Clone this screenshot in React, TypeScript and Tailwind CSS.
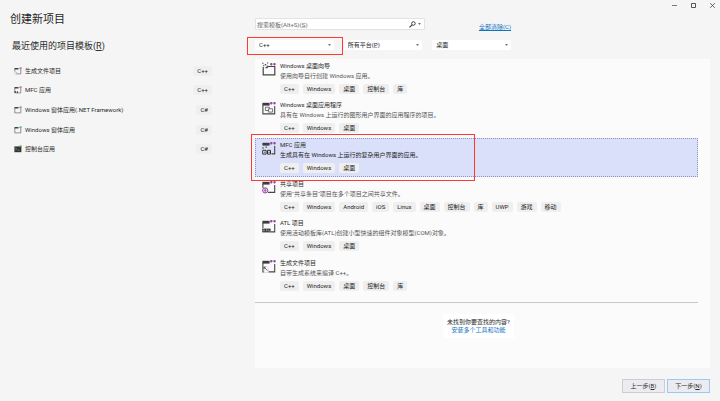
import React, { ReactNode } from "react";

type IconKind = "wizard" | "desktop" | "mfc" | "shared" | "atl" | "makefile";

interface Template {
  name: string;
  desc: string;
  icon: IconKind;
  tags: string[];
}

const TEMPLATES: Template[] = [
  {
    name: "Windows 桌面向导",
    desc: "使用向导自行创建 Windows 应用。",
    icon: "wizard",
    tags: ["C++", "Windows", "桌面", "控制台", "库"],
  },
  {
    name: "Windows 桌面应用程序",
    desc: "具有在 Windows 上运行的图形用户界面的应用程序的项目。",
    icon: "desktop",
    tags: ["C++", "Windows", "桌面"],
  },
  {
    name: "MFC 应用",
    desc: "生成具有在 Windows 上运行的复杂用户界面的应用。",
    icon: "mfc",
    tags: ["C++", "Windows", "桌面"],
  },
  {
    name: "共享项目",
    desc: "使用\"共享条目\"项目在多个项目之间共享文件。",
    icon: "shared",
    tags: ["C++", "Windows", "Android", "iOS", "Linux", "桌面", "控制台", "库", "UWP", "游戏", "移动"],
  },
  {
    name: "ATL 项目",
    desc: "使用活动模板库(ATL)创建小型快速的组件对象模型(COM)对象。",
    icon: "atl",
    tags: ["C++", "Windows", "桌面"],
  },
  {
    name: "生成文件项目",
    desc: "自带生成系统来编译 C++。",
    icon: "makefile",
    tags: ["C++", "Windows", "桌面", "控制台", "库"],
  },
];

const RECENT = [
  { name: "生成文件项目", lang: "C++", kind: "makefile" },
  { name: "MFC 应用", lang: "C++", kind: "mfc" },
  { name: "Windows 窗体应用(.NET Framework)", lang: "C#", kind: "form" },
  { name: "Windows 窗体应用", lang: "C#", kind: "form" },
  { name: "控制台应用", lang: "C#", kind: "console" },
];

const TemplateIcon = ({ kind }: { kind: IconKind }) => (
  <svg viewBox="0 0 14 14" className="w-3.5 h-3.5 shrink-0" fill="none" aria-hidden="true">
    {/* window frame */}
    {kind === "wizard" ? (
      <>
        <path d="M1.2 5v7.9h11.6V4.5H6l-1 1.2H3.5" stroke="#444" strokeWidth="1.2" />
        <path d="M.2 1.2h1.3M2.8 2.6h1.4M1 3.8h1.3M5 1h1.2M4.6 4h1.2" stroke="#444" strokeWidth="1.1" />
      </>
    ) : (
      <>
        <path d="M.4 1.8h7.2v2.8H.4z" fill="#3c3c3c" />
        <path
          d={
            kind === "desktop"
              ? "M.9 4v8.9h11.8V5"
              : kind === "mfc"
                ? "M9.5 12.9h3.2V5"
                : kind === "atl"
                  ? "M.9 4v5M8.5 12.9h4.2V5"
                  : kind === "shared"
                    ? "M.9 4v4M6 12.4h6.7V5"
                    : "M.9 4v9h1M6.5 12.9h6.2V5"
          }
          stroke="#484848"
          strokeWidth="1.1"
        />
      </>
    )}
    <path d="M8 2.2h2.6M9.3.9v2.6M11.2 2.2h2.6M12.5.9v2.6" stroke="#93479f" strokeWidth="1.3" />
    {kind === "desktop" && (
      <>
        <path d="M3.4 6.2h4v3.3h-4z" stroke="#555" strokeWidth=".8" />
        <path d="M6.4 7.8h4.2v3.3H6.4z" fill="#fbfbfb" stroke="#555" strokeWidth=".8" />
      </>
    )}
    {kind === "mfc" && (
      <>
        <path d="M1 6.2v1.6M3.5 6.2h1.4" stroke="#444" strokeWidth="1.2" />
        <path d="M.7 9.3h3.4v3.8H.7zM5.5 9.3h3v3.8h-3z" fill="#f5f5f5" stroke="#333" strokeWidth="1" />
        <path d="M1.8 11.2h1.4M6.3 11.2h1.6" stroke="#333" strokeWidth=".9" />
      </>
    )}
    {kind === "shared" && (
      <>
        <circle cx="3.2" cy="10.4" r="2.6" fill="#f1def3" stroke="#93479f" strokeWidth="1" />
        <path d="M3.2 8.2v4.4M1.8 10.4h2.8" stroke="#93479f" strokeWidth=".8" />
      </>
    )}
    {kind === "atl" && (
      <>
        <path d="M.2 9.6h8.4v3.8H.2z" fill="#3c3c3c" />
        <path d="M1.4 12.2v-1.2h1v1.2M4 10.8h1.4M4.7 10.8v1.6M6.7 10.6v1.6h1" stroke="#ddd" strokeWidth=".5" />
      </>
    )}
    {kind === "makefile" && (
      <>
        <path d="M2.2 7.6h2.4l1.6 1.6v4.2h-4z" fill="#fff" stroke="#aaa" strokeWidth=".4" />
        <path d="M2 8.2l3.4 3.4M2 8.2v1.8M2 8.2h1.6" stroke="#444" strokeWidth=".9" />
      </>
    )}
  </svg>
);

const RecentIcon = ({ kind }: { kind: string }) => {
  const accent = kind === "form" || kind === "console" ? "#4aa564" : "#a45cae";
  return (
    <svg viewBox="0 0 8 8" className="w-2 h-2 shrink-0" fill="none" aria-hidden="true">
      {kind === "console" ? (
        <>
          <path d="M.4 1.4h7v5.8h-7z" fill="#333" />
          <path d="M1.4 3l1.2 1-1.2 1M3.6 5.2h2" stroke="#ccc" strokeWidth=".5" />
        </>
      ) : (
        <>
          <path d="M.8 1.8v5.1h6V1.8" stroke="#666" strokeWidth=".7" />
          <path d="M.5 1h4v1.5h-4z" fill="#444" />
        </>
      )}
      {kind === "makefile" && <path d="M.2 4h2.2v3.4H.2z" fill="#f5f5f5" />}
      {kind === "makefile" && <path d="M1 4.4l1.8 1.8" stroke="#555" strokeWidth=".6" />}
      {kind === "mfc" && <path d="M.5 5h1.4v2H.5zM2.8 5.2h1.2V7H2.8z" fill="#555" />}
      <path d="M4.9 1.2h2.7M6.9.2v2" stroke={accent} strokeWidth=".8" />
    </svg>
  );
};

const Tag = ({ children }: { children: ReactNode }) => (
  <span className="h-2.5 px-1 flex items-center rounded-[2px] bg-[#efefef] text-[#1e1e1e] whitespace-nowrap">
    {children}
  </span>
);

const Filter = ({ label, value, children }: { label: string; value: string; children?: ReactNode }) => (
  <div className="relative h-2.5 flex items-center bg-white">
    <select
      aria-label={label}
      defaultValue={value}
      className="w-full h-2.5 pl-1 pr-3 appearance-none bg-transparent text-[#1e1e1e] outline-none"
    >
      <option value={value}>{value}</option>
    </select>
    <svg viewBox="0 0 4 2" className="absolute right-[3px] w-[3px] h-[2px] pointer-events-none" aria-hidden="true">
      <path d="M0 0h4L2 2z" fill="#444" />
    </svg>
    {children}
  </div>
);

const WindowControls = () => (
  <div className="flex justify-end gap-3.5 pt-[3px] pr-[5px] h-[18px] text-[#444]">
    <button type="button" aria-label="最小化" className="w-[5px] h-[5px]">
      <svg viewBox="0 0 5 5" className="w-full h-full" stroke="currentColor" strokeWidth=".7">
        <path d="M0 2.5h5" />
      </svg>
    </button>
    <button type="button" aria-label="最大化" className="w-[5px] h-[5px]">
      <svg viewBox="0 0 5 5" className="w-full h-full" fill="none" stroke="currentColor" strokeWidth=".9">
        <path d="M.5.5h4v4h-4z" />
      </svg>
    </button>
    <button type="button" aria-label="关闭" className="w-[5px] h-[5px]">
      <svg viewBox="0 0 5 5" className="w-full h-full" stroke="currentColor" strokeWidth=".8">
        <path d="M.2.2l4.6 4.6M4.8.2L.2 4.8" />
      </svg>
    </button>
  </div>
);

const RecentTemplates = () => (
  <aside className="pl-3 pr-[43px]">
    <h2 className="text-[9px] leading-[12px] pt-3 text-[#2a2a2a]">
      最近使用的项目模板(<u>R</u>)
    </h2>
    <ul className="mt-[9px] h-[98px] flex flex-col">
      {RECENT.map((item) => (
        <li key={item.name} className="flex-1 flex items-center pl-0.5 gap-[3px]">
          <RecentIcon kind={item.kind} />
          <span className="flex-1">{item.name}</span>
          <Tag>{item.lang}</Tag>
        </li>
      ))}
    </ul>
  </aside>
);

const TemplateRow = ({ item, selected }: { item: Template; selected: boolean }) => (
  <li
    className={`relative flex-1 flex gap-1 pl-[7px] pt-[3px] ${
      selected ? "bg-[#dadffa] outline outline-dotted outline-1 -outline-offset-1 outline-[#8b93c4]" : ""
    }`}
  >
    <TemplateIcon kind={item.icon} />
    <div className="leading-[8px]">
      <h3>{item.name}</h3>
      <p className={`mt-0.5 ${selected ? "text-[#1e1e1e]" : "text-[#555]"}`}>{item.desc}</p>
      <div className="mt-1 flex gap-1">
        {item.tags.map((tag) => (
          <Tag key={tag}>{tag}</Tag>
        ))}
      </div>
    </div>
    {selected && (
      <div className="absolute -left-1 -top-1 -bottom-1 w-[224px] border border-[#ff3b30] pointer-events-none" />
    )}
  </li>
);

const App = () => {
  return (
    <div className="min-h-screen flex flex-col bg-[#f5f5f5] text-[#2a2a2a] text-[6px] leading-[8px] font-[Roboto,'Noto_Sans_CJK_SC',sans-serif]">
      <main className="flex-1 grid grid-cols-[255px_1fr]">
        <div>
          <h1 className="pl-2.5 pt-3 text-[11px] leading-[16px] text-[#1e1e1e]">创建新项目</h1>
          <RecentTemplates />
        </div>

        <div className="flex flex-col">
          <WindowControls />
          <div className="flex items-start pr-2.5">
            <label className="w-[170px] h-3 flex items-center pl-px pr-[3px] gap-0.5 bg-white border border-[#e3e3e3]">
              <input
                type="text"
                aria-label="搜索模板"
                placeholder="搜索模板(Alt+S)(S̲)"
                className="flex-1 min-w-0 h-2.5 outline-none placeholder:text-[#666]"
              />
              <svg viewBox="0 0 7 7" className="w-[7px] h-[7px]" fill="none" stroke="#333" aria-hidden="true">
                <circle cx="4.4" cy="2.5" r="1.8" strokeWidth=".9" />
                <path d="M3 3.9L.5 6.4" strokeWidth="1.1" />
              </svg>
              <svg viewBox="0 0 4 2" className="w-[3px] h-[2px]" aria-hidden="true">
                <path d="M0 0h4L2 2z" fill="#444" />
              </svg>
            </label>
            <a href="#" className="ml-[54px] mt-[5px] text-[#0f73be] underline">
              全部清除(C)
            </a>
          </div>

          <div className="mt-[9px] w-64 grid grid-cols-3 gap-2.5">
            <Filter label="语言" value="C++">
              <div className="absolute -left-2 -right-[9px] -top-[3px] -bottom-[5px] border border-[#ff3b30] pointer-events-none" />
            </Filter>
            <Filter label="平台" value="所有平台(P̲)" />
            <Filter label="项目类型" value="桌面" />
          </div>

          <section className="flex-1 mt-[9px] mr-2.5 bg-[#fbfbfb]">
            <ul className="h-[236px] flex flex-col pr-3">
              {TEMPLATES.map((item) => (
                <TemplateRow key={item.name} item={item} selected={item.icon === "mfc"} />
              ))}
            </ul>
            <hr className="mt-[7px] mr-3 border-[#c8c8c8]" />
            <div className="mt-[11px] pr-2 flex justify-center">
              <div className="px-1 py-1 bg-white text-center">
                <p>未找到你要查找的内容?</p>
                <a href="#" className="block text-[#0f73be]">
                  安装多个工具和功能
                </a>
              </div>
            </div>
          </section>
        </div>
      </main>

      <footer className="flex justify-end gap-0.5 pt-[11px] pb-2 pr-2.5">
        <button type="button" className="w-[43px] h-3.5 bg-[#ececf0] border border-[#ccced6]">
          上一步(<u>B</u>)
        </button>
        <button type="button" className="w-[43px] h-3.5 bg-[#ececf0] border border-[#9cc8f5]">
          下一步(<u>N</u>)
        </button>
      </footer>
    </div>
  );
};

export default App;
